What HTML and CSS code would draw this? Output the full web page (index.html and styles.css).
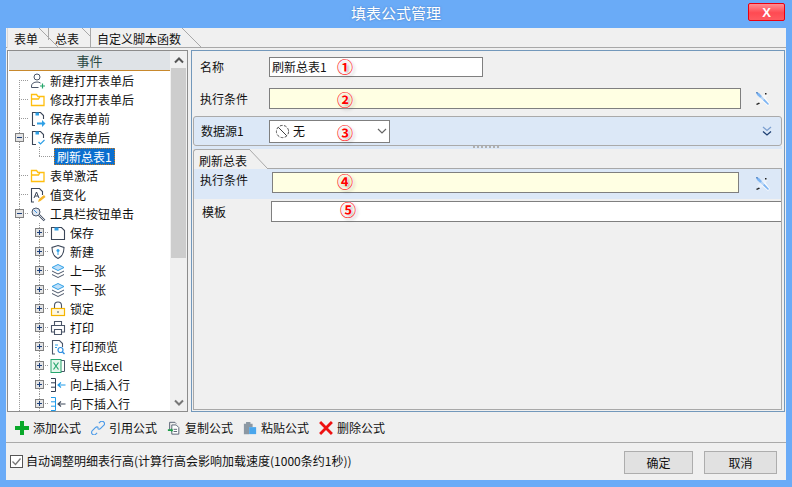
FILE: index.html
```html
<!DOCTYPE html>
<html lang="zh">
<head>
<meta charset="utf-8">
<title>填表公式管理</title>
<link rel="stylesheet" href="styles.css">
</head>
<body>
<svg class="defs" width="0" height="0">
  <symbol id="i-exp-minus" viewBox="0 0 9 9"><rect x=".5" y=".5" width="8" height="8" fill="#e4e4e4" stroke="#808080"/><path d="M2 4.5h5" stroke="#1c3f7a"/></symbol>
  <symbol id="i-exp-plus" viewBox="0 0 9 9"><rect x=".5" y=".5" width="8" height="8" fill="#e4e4e4" stroke="#808080"/><path d="M2 4.5h5M4.5 2v5" stroke="#1c3f7a"/></symbol>
  <symbol id="i-user" viewBox="0 0 16 16"><circle cx="7" cy="4" r="3" fill="none" stroke="#4a5568"/><path d="M1.5 14.5v-1.5c0-2.500 2.500-4 5.500-4 1.500 0 2.500.3 3.500 1M1.500 14.500h7" fill="none" stroke="#4a5568"/><path d="M12.500 10.500v5M10 13h5" stroke="#25a56a" stroke-width="1.200"/></symbol>
  <symbol id="i-folder" viewBox="0 0 16 16"><path d="M1.500 13.500v-11h5l1.500 2h6v9zM1.500 7h7l1.500-2.500" fill="none" stroke="#ffbe0f" stroke-width="1.300"/></symbol>
  <symbol id="i-save-in" viewBox="0 0 16 16"><path d="M5 14.500H2.500v-13h8l3 3V8" fill="none" stroke="#3b4658" stroke-width="1.100"/><path d="M5.500 1.500v3h3.500v-3" fill="#2fa0e6"/><path d="M7 11.500h5V9l3.500 3.500L12 16v-2.500H7z" fill="#2fa0e6"/></symbol>
  <symbol id="i-save-ok" viewBox="0 0 16 16"><path d="M6 14.500H2.500v-13h8l3 3V8" fill="none" stroke="#3b4658" stroke-width="1.100"/><path d="M5.500 1.500v3h3.500v-3" fill="#2fa0e6"/><path d="M8.500 12l2 2 4-4" fill="none" stroke="#2fa0e6" stroke-width="1.200"/></symbol>
  <symbol id="i-value" viewBox="0 0 16 16"><path d="M4 15H1.500V1.500h8l3 3V8" fill="none" stroke="#3b4658" stroke-width="1.100"/><path d="M4 11l2.500-6L9 11M5 9h3" fill="none" stroke="#3b4658"/><path d="M8 15l1-3 5-4 1.500 2-5 4z" fill="#f5b52a"/></symbol>
  <symbol id="i-tool" viewBox="0 0 16 16"><circle cx="6" cy="6" r="4" fill="#dfe6ef" stroke="#4a5568"/><path d="M9 9l5.500 5.500" stroke="#4a5568" stroke-width="2.400"/><path d="M9 9l5.500 5.500" stroke="#cfd6df"/><path d="M4 4l3 3" stroke="#3d8fdc"/></symbol>
  <symbol id="i-save" viewBox="0 0 16 16"><path d="M1.500 14.500v-12h10l3 3v9z" fill="none" stroke="#3b4658" stroke-width="1.100"/><path d="M4.500 2.500v3h4v-3" fill="#2fa0e6"/></symbol>
  <symbol id="i-shield" viewBox="0 0 16 16"><path d="M8 1.500l6 2c0 5-1.500 9-6 11-4.500-2-6-6-6-11z" fill="none" stroke="#3b4658" stroke-width="1.100"/><circle cx="8" cy="6.500" r="1.500" fill="#2fa0e6"/><path d="M8 8v3" stroke="#2fa0e6"/></symbol>
  <symbol id="i-layers" viewBox="0 0 16 16"><path d="M8 1.500l6 3-6 3-6-3z" fill="#bfe0fa" stroke="#2fa0e6"/><path d="M2 8l6 3 6-3M2 11.500l6 3 6-3" fill="none" stroke="#4a5568"/></symbol>
  <symbol id="i-lock" viewBox="0 0 16 16"><path d="M4.500 7V4.500a3.500 3.500 0 017 0V7" fill="none" stroke="#4a5568" stroke-width="1.100"/><rect x="1.500" y="7.500" width="13" height="7" fill="#fff8e0" stroke="#f5b400" stroke-width="1.200"/><path d="M7 11h2" stroke="#4a5568"/></symbol>
  <symbol id="i-print" viewBox="0 0 16 16"><path d="M4.500 5V1.500h7V5M4 12H1.500V5.500h13V12H12" fill="none" stroke="#4a5568" stroke-width="1.100"/><path d="M4.500 9.500h7v5h-7z" fill="none" stroke="#4a5568" stroke-width="1.100"/></symbol>
  <symbol id="i-preview" viewBox="0 0 16 16"><path d="M5 15H2.500V1.500h7l3 3V8" fill="none" stroke="#4a5568" stroke-width="1.100"/><path d="M5 6h3M5 8.500h2" stroke="#2fa0e6"/><circle cx="10.500" cy="11" r="2.500" fill="none" stroke="#2f8fe0" stroke-width="1.200"/><path d="M12.500 13l2 2" stroke="#2f8fe0" stroke-width="1.400"/></symbol>
  <symbol id="i-excel" viewBox="0 0 16 16"><path d="M9 2.500h5.500v11H9" fill="none" stroke="#4a5568"/><rect x="1" y="1.500" width="10" height="13" fill="#e6f7ec" stroke="#28a76f"/><path d="M3.500 4.500l5 7M8.500 4.500l-5 7" stroke="#28a76f" stroke-width="1.200"/></symbol>
  <symbol id="i-ins-up" viewBox="0 0 16 16"><path d="M1 1.500h4.500v13H1M1 5.800h4.500M1 10.200h4.500" fill="none" stroke="#2f3d52"/><path d="M15.500 8H8M11 5.500L8 8l3 2.500" fill="none" stroke="#1f9bea" stroke-width="1.100"/></symbol>
  <symbol id="i-ins-down" viewBox="0 0 16 16"><path d="M1 1.500h4.500v13H1M1 5.800h4.500M1 10.200h4.500" fill="none" stroke="#1f9bea"/><path d="M15.500 8H8M11 5.500L8 8l3 2.500" fill="none" stroke="#3b4658" stroke-width="1.100"/></symbol>
  <symbol id="i-wand" viewBox="0 0 16 16"><path d="M7 10l6 5 2-2-5-7z" fill="#fff" opacity=".8"/><path d="M1 1l3 1 10 11-1 1L2 4z" fill="#7db4f2"/><path d="M1 1l2 .5-1 1.500z" fill="#3d6fb0"/><path d="M1 13l3-1.500 1 1-3 1.500z" fill="#222"/><path d="M10 2h1.500v1.500H10z" fill="#222"/><path d="M2 10l6-6 5 0-7 8z" fill="#fff" opacity=".45"/></symbol>
  <symbol id="i-dbl" viewBox="0 0 10 10"><path d="M1 1l4 3.500L9 1" fill="none" stroke="#7da0d0" stroke-width="1.300"/><path d="M1 5.500L5 9l4-3.500" fill="none" stroke="#1d3f73" stroke-width="1.300"/></symbol>
  <symbol id="i-none" viewBox="0 0 16 16"><circle cx="8" cy="8" r="6.500" fill="none" stroke="#444" stroke-dasharray="3 1.500"/><path d="M3.500 3.500l9 9" stroke="#333"/></symbol>
  <symbol id="i-chev" viewBox="0 0 10 6"><path d="M1 1l4 4 4-4" fill="none" stroke="#666" stroke-width="1.200"/></symbol>
  <symbol id="i-plus" viewBox="0 0 14 14"><path d="M5 0h4v5h5v4H9v5H5V9H0V5h5z" fill="#0aa82a"/></symbol>
  <symbol id="i-link" viewBox="0 0 16 16"><g fill="none" stroke="#4a9ae8" stroke-width="1.300"><path d="M9 2.500l1.500-1.500a2.500 2.500 0 014 4L11 8.500a2.500 2.500 0 01-3.500 0"/><path d="M7 13.500L5.500 15a2.500 2.500 0 01-4-4L5 7.500a2.500 2.500 0 013.500 0"/></g></symbol>
  <symbol id="i-copy" viewBox="0 0 16 16"><path d="M3 10V1.500h6l1.500 1.500" fill="none" stroke="#4a5568"/><path d="M5.500 15V4.500h5l3 3V15z" fill="#fff" stroke="#4a5568"/><path d="M7.500 9.500h4M7.500 12h4" stroke="#4a5568"/><path d="M1 9.500h4V8l2 2.500L5 13v-1.500H1z" fill="#1e9e48"/></symbol>
  <symbol id="i-paste" viewBox="0 0 16 16"><path d="M1 3h2.500V1h5v2H11v4H7v8H1z" fill="#8c98a3"/><path d="M7 7h8v8H7z" fill="#4aa6ec"/></symbol>
  <symbol id="i-x" viewBox="0 0 13 13"><path d="M1 1l11 11M12 1L1 12" stroke="#ee1111" stroke-width="2.600"/></symbol>
  <symbol id="i-check" viewBox="0 0 13 13"><rect x=".5" y=".5" width="12" height="12" fill="#fff" stroke="#555"/><path d="M2.500 6.500l3 3 5-6" fill="none" stroke="#777" stroke-width="1.300"/></symbol>
  <symbol id="i-up" viewBox="0 0 10 8"><path d="M1 6.500L5 2.500l4 4" fill="none" stroke="#555" stroke-width="2"/></symbol>
  <symbol id="i-down" viewBox="0 0 10 8"><path d="M1 1.500L5 5.500l4-4" fill="none" stroke="#777" stroke-width="2"/></symbol>
</svg>

<div class="window">
  <header class="titlebar">
    <h1 class="title">填表公式管理</h1>
    <button class="close">X</button>
  </header>

  <div class="client">
    <nav class="tabs">
      <div class="tab tab-a">表单<svg class="slant" viewBox="0 0 19 20" width="19" height="20"><path d="M0 0l19 19" stroke="#a8a8a8" fill="none"/></svg></div>
      <div class="tab tab-b">总表<svg class="slant" viewBox="0 0 19 20" width="19" height="20"><path d="M0 0l19 19" stroke="#a8a8a8" fill="none"/></svg></div>
      <div class="tab tab-c">自定义脚本函数<svg class="slant" viewBox="0 0 19 20" width="19" height="20"><path d="M0 0l19 19" stroke="#a8a8a8" fill="none"/></svg></div>
    </nav>

    <div class="main">
      <aside class="tree-panel">
        <div class="tree">
          <div class="tree-head">事件</div>
          <div class="rows">
            <div class="row"><span class="cell tee-first"></span><svg class="ic"><use href="#i-user"/></svg><span>新建打开表单后</span></div>
            <div class="row"><span class="cell tee"></span><svg class="ic"><use href="#i-folder"/></svg><span>修改打开表单后</span></div>
            <div class="row"><span class="cell tee"></span><svg class="ic"><use href="#i-save-in"/></svg><span>保存表单前</span></div>
            <div class="row"><span class="cell tee"><svg class="exp"><use href="#i-exp-minus"/></svg></span><svg class="ic"><use href="#i-save-ok"/></svg><span>保存表单后</span></div>
            <div class="row"><span class="cell v"></span><span class="cell corner"></span><span class="selected">刷新总表1</span></div>
            <div class="row"><span class="cell tee"></span><svg class="ic"><use href="#i-folder"/></svg><span>表单激活</span></div>
            <div class="row"><span class="cell tee"></span><svg class="ic"><use href="#i-value"/></svg><span>值变化</span></div>
            <div class="row"><span class="cell tee"><svg class="exp"><use href="#i-exp-minus"/></svg></span><svg class="ic"><use href="#i-tool"/></svg><span>工具栏按钮单击</span></div>
            <div class="row"><span class="cell v"></span><span class="cell tee"><svg class="exp"><use href="#i-exp-plus"/></svg></span><svg class="ic"><use href="#i-save"/></svg><span>保存</span></div>
            <div class="row"><span class="cell v"></span><span class="cell tee"><svg class="exp"><use href="#i-exp-plus"/></svg></span><svg class="ic"><use href="#i-shield"/></svg><span>新建</span></div>
            <div class="row"><span class="cell v"></span><span class="cell tee"><svg class="exp"><use href="#i-exp-plus"/></svg></span><svg class="ic"><use href="#i-layers"/></svg><span>上一张</span></div>
            <div class="row"><span class="cell v"></span><span class="cell tee"><svg class="exp"><use href="#i-exp-plus"/></svg></span><svg class="ic"><use href="#i-layers"/></svg><span>下一张</span></div>
            <div class="row"><span class="cell v"></span><span class="cell tee"><svg class="exp"><use href="#i-exp-plus"/></svg></span><svg class="ic"><use href="#i-lock"/></svg><span>锁定</span></div>
            <div class="row"><span class="cell v"></span><span class="cell tee"><svg class="exp"><use href="#i-exp-plus"/></svg></span><svg class="ic"><use href="#i-print"/></svg><span>打印</span></div>
            <div class="row"><span class="cell v"></span><span class="cell tee"><svg class="exp"><use href="#i-exp-plus"/></svg></span><svg class="ic"><use href="#i-preview"/></svg><span>打印预览</span></div>
            <div class="row"><span class="cell v"></span><span class="cell tee"><svg class="exp"><use href="#i-exp-plus"/></svg></span><svg class="ic"><use href="#i-excel"/></svg><span>导出Excel</span></div>
            <div class="row"><span class="cell v"></span><span class="cell tee"><svg class="exp"><use href="#i-exp-plus"/></svg></span><svg class="ic"><use href="#i-ins-up"/></svg><span>向上插入行</span></div>
            <div class="row"><span class="cell v"></span><span class="cell tee"><svg class="exp"><use href="#i-exp-plus"/></svg></span><svg class="ic"><use href="#i-ins-down"/></svg><span>向下插入行</span></div>
          </div>
        </div>
        <div class="scrollbar">
          <svg class="sb-arrow"><use href="#i-up"/></svg>
          <div class="sb-thumb"></div>
          <div class="sb-track"></div>
          <svg class="sb-arrow"><use href="#i-down"/></svg>
        </div>
      </aside>

      <section class="editor">
        <div class="field field-name">
          <label class="label">名称</label>
          <div class="input input-name">刷新总表1</div>
        </div>
        <div class="field field-cond">
          <label class="label">执行条件</label>
          <div class="input input-cond"></div>
          <svg class="wand"><use href="#i-wand"/></svg>
        </div>
        <div class="group">
          <label class="label">数据源1</label>
          <div class="select"><svg class="none-ic"><use href="#i-none"/></svg><span class="select-text">无</span><svg class="chev"><use href="#i-chev"/></svg></div>
          <svg class="dbl"><use href="#i-dbl"/></svg>
        </div>
        <div class="splitter"><i></i><i></i><i></i><i></i><i></i><i></i><i></i></div>
        <div class="subtab">
          <div class="subtab-head">
            <div class="subtab-label">刷新总表</div>
            <svg class="subtab-slant" viewBox="0 0 18 20" width="18" height="20"><path d="M0 0l18 19" stroke="#a8a8a8" fill="none"/></svg>
            <div class="subtab-line"></div>
          </div>
          <div class="subtab-body">
            <div class="sub-cond">
              <label class="label">执行条件</label>
              <div class="input input-cond2"></div>
              <svg class="wand wand2"><use href="#i-wand"/></svg>
            </div>
            <div class="sub-tpl">
              <label class="label">模板</label>
              <div class="input input-tpl"></div>
            </div>
          </div>
        </div>
        <span class="mark m1">①</span>
        <span class="mark m2">②</span>
        <span class="mark m3">③</span>
        <span class="mark m4">④</span>
        <span class="mark m5">⑤</span>
      </section>
    </div>

    <div class="toolbar">
      <div class="tool"><svg class="t-ic"><use href="#i-plus"/></svg><span>添加公式</span></div>
      <div class="tool"><svg class="t-ic"><use href="#i-link"/></svg><span>引用公式</span></div>
      <div class="tool"><svg class="t-ic"><use href="#i-copy"/></svg><span>复制公式</span></div>
      <div class="tool"><svg class="t-ic"><use href="#i-paste"/></svg><span>粘贴公式</span></div>
      <div class="tool"><svg class="t-ic"><use href="#i-x"/></svg><span>删除公式</span></div>
    </div>

    <footer class="footer">
      <div class="check"><svg class="check-box"><use href="#i-check"/></svg><span>自动调整明细表行高(计算行高会影响加载速度(1000条约1秒))</span></div>
      <button class="btn btn-ok">确定</button>
      <button class="btn btn-cancel">取消</button>
    </footer>
  </div>
</div>
</body>
</html>
```

FILE: styles.css
```css
* { box-sizing: border-box; }
html, body { margin: 0; padding: 0; }
body {
  width: 792px;
  height: 487px;
  overflow: hidden;
  background: #6aabf7;
  font: 12px/16px "Noto Sans CJK SC", "Liberation Sans", sans-serif;
  color: #111;
}
.defs { display: block; height: 0; }
.window { display: flex; flex-direction: column; height: 487px; }

.titlebar { position: relative; height: 28px; flex: none; display: flex; justify-content: center; align-items: center; }
.title { margin: 0 0 2px; font-size: 15px; font-weight: 400; line-height: 20px; color: #fff; text-shadow: 0 0 2px rgba(40,80,140,.5); }
.close {
  position: absolute; left: 748px; top: 3px; width: 37px; height: 18px; padding: 0;
  border: 1px solid #e8000f; border-radius: 2px;
  background: linear-gradient(#ff8e92, #ff4a52 55%, #ff5a60);
  color: #fff; font: 700 13px/15px "Liberation Sans", sans-serif;
}

.client { flex: 1; margin: 0 6px 7px; background: #f0f0f0; display: flex; flex-direction: column; min-height: 0; }

.tabs { height: 20px; flex: none; display: flex; border-bottom: 1px solid #a8a8a8; }
.tab { position: relative; height: 19px; padding: 3px 0 0 6px; line-height: 16px; background: #f0f0f0; border-left: 1px solid #a8a8a8; }
.slant { position: absolute; top: 0; left: 100%; }
.tab-a { width: 32px; margin-left: 1px; border-left-color: #d8d8d8; z-index: 3; height: 20px; margin-bottom: -1px; }
.tab-b { width: 34px; margin-left: 9px; height: 12px; z-index: 1; overflow: visible; white-space: nowrap; }
.tab-c { width: 92px; margin-left: 8px; z-index: 2; }

.main { height: 364px; flex: none; display: flex; padding: 2px 1px 0; gap: 3px; }

.tree-panel { width: 181px; flex: none; display: flex; border: 1px solid #8c8c8c; background: #fff; padding: 0 0 0 1px; }
.tree { width: 161px; flex: none; display: flex; flex-direction: column; min-height: 0; }
.tree-head { height: 20px; flex: none; background: #dfe3e7; border-bottom: 1px solid #c8892d; text-align: center; font-size: 13px; line-height: 19px; color: #2c4a44; }
.rows { flex: 1; min-height: 0; overflow: hidden; }
.row { display: flex; align-items: center; height: 19px; white-space: nowrap; }
.cell { position: relative; width: 20px; height: 19px; flex: none; }
.cell::before, .cell::after { content: ""; position: absolute; }
.cell::before { left: 10px; width: 1px; top: 0; bottom: 0; background: repeating-linear-gradient(#9a9a9a 0 1px, transparent 1px 2px); }
.cell::after { left: 10px; right: 0; top: 9px; height: 1px; background: repeating-linear-gradient(90deg, #9a9a9a 0 1px, transparent 1px 2px); }
.v::after { display: none; }
.tee-first::before { top: 9px; }
.corner { width: 25px; }
.corner::before { bottom: 9px; }
.exp { position: absolute; left: 6px; top: 5px; width: 9px; height: 9px; z-index: 1; }
.ic { width: 16px; height: 16px; flex: none; margin: 0 4px 0 1px; }
.selected { height: 17px; padding: 0 2px; line-height: 15px; background: #0a6fcf; color: #fff; border: 1px dotted #c47a20; }

.scrollbar { width: 17px; flex: none; display: flex; flex-direction: column; align-items: center; background: #f0f0f0; }
.sb-arrow { width: 10px; height: 8px; flex: none; margin: 5px 0 4px; }
.sb-thumb { width: 15px; height: 190px; flex: none; background: #cdcdcd; }
.sb-track { flex: 1; }

.editor { position: relative; flex: 1; min-width: 0; display: flex; flex-direction: column; border: 1px solid #7398bb; padding-top: 6px; }
.label { display: block; line-height: 16px; }
.input { height: 21px; border: 1px solid #7f7f7f; background: #fff; line-height: 18px; }
.field { display: flex; align-items: center; padding-left: 8px; }
.field .label { width: 69px; flex: none; }
.field-name { height: 20px; }
.input-name { width: 214px; height: 20px; padding-left: 2px; }
.field-cond { margin-top: 11px; height: 21px; }
.input-cond { width: 472px; background: #ffffe3; }
.wand { width: 16px; height: 16px; flex: none; margin-left: 14px; }

.group { height: 30px; flex: none; margin: 7px 2px 0 1px; padding-left: 7px; display: flex; align-items: center; background: #dce8f7; border: 1px solid #aaa; border-radius: 3px; }
.group .label { width: 68px; flex: none; }
.select { width: 121px; height: 23px; display: flex; align-items: center; background: #fff; border: 1px solid #7f7f7f; padding-left: 5px; }
.none-ic { width: 15px; height: 15px; flex: none; }
.select-text { margin-left: 3px; flex: 1; }
.chev { width: 10px; height: 6px; flex: none; margin-right: 2px; }
.dbl { width: 10px; height: 10px; flex: none; margin-left: auto; margin-right: 9px; }

.splitter { height: 3px; flex: none; margin: 0 2px 0 1px; background: #dce8f7; display: flex; justify-content: center; gap: 2px; padding-right: 3px; }
.splitter i { width: 2px; height: 2px; background: #b0b0b0; }

.subtab { flex: 1; min-height: 0; margin: 0 2px 1px 1px; display: flex; flex-direction: column; }
.subtab-head { height: 20px; flex: none; display: flex; }
.subtab-label { width: 56px; flex: none; padding: 3px 0 0 5px; line-height: 16px; border-left: 1px solid #aaa; border-top: 1px solid #aaa; border-top-left-radius: 3px; }
.subtab-slant { flex: none; }
.subtab-line { flex: 1; border-bottom: 1px solid #a8a8a8; margin-top: 0; }
.subtab-body { flex: 1; border: 1px solid #a8a8a8; border-top: 0; display: flex; flex-direction: column; }
.sub-cond { height: 30px; flex: none; display: flex; align-items: flex-start; background: #dce8f7; padding: 3px 0 0 6px; }
.sub-cond .label { width: 72px; flex: none; margin-top: 0; }
.input-cond2 { width: 467px; background: #ffffe3; }
.wand2 { margin: 4px 0 0 16px; }
.sub-tpl { display: flex; align-items: center; padding: 2px 0 0 8px; }
.sub-tpl .label { width: 69px; flex: none; }
.input-tpl { flex: 1; border-right: 0; }

.mark {
  position: absolute; width: 18px; height: 20px; text-align: center;
  font-size: 16px; font-weight: 700; line-height: 20px; color: #f00;
  text-shadow: 0 0 1px #fff, 0 0 2px #fff, 2px 2px 3px rgba(0,0,0,.35);
}
.m1 { left: 144px; top: 5px; }
.m2 { left: 144px; top: 38px; }
.m3 { left: 144px; top: 71px; }
.m4 { left: 144px; top: 120px; }
.m5 { left: 147px; top: 148px; }

.toolbar { height: 30px; flex: none; display: flex; align-items: center; padding: 1px 0 0 9px; gap: 9px; }
.tool { display: flex; align-items: center; gap: 4px; width: 67px; white-space: nowrap; }
.t-ic { width: 14px; height: 14px; flex: none; }

.footer { flex: 1; min-height: 0; display: flex; align-items: flex-start; border-top: 1px solid #aaa; margin-top: 0; padding: 8px 9px 0 4px; }
.check { display: flex; align-items: center; gap: 3px; margin-top: 2px; margin-right: auto; }
.check-box { width: 13px; height: 13px; flex: none; }
.btn { height: 23px; padding: 0; border: 1px solid #adadad; background: #e1e1e1; font: inherit; color: #111; font-size: 12px; }
.btn-ok { width: 69px; margin-right: 11px; }
.btn-cancel { width: 73px; }
```
